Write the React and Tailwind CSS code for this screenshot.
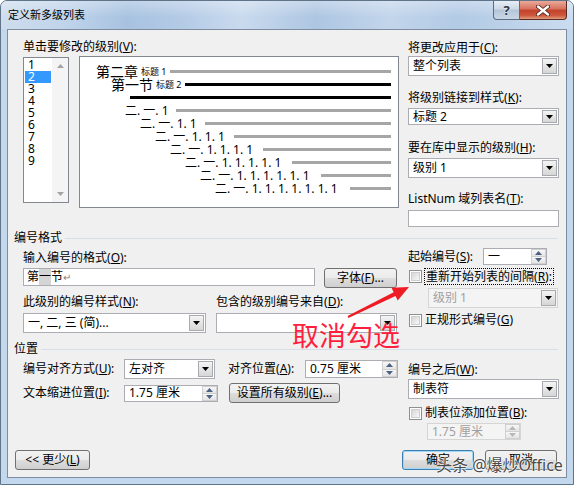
import React from 'react';

const FONT = "font-['Noto_Sans','Noto_Sans_CJK_SC',sans-serif]";

function Key({ label, k, colon = true }) {
  return (
    <span className="whitespace-nowrap">
      {label}(<u>{k}</u>){colon ? ':' : ''}
    </span>
  );
}

function Down({ color = '#000' }) {
  return (
    <svg width="7" height="4" viewBox="0 0 7 4">
      <path d="M0 0h7L3.5 4z" fill={color} />
    </svg>
  );
}

function Up({ color = '#000' }) {
  return (
    <svg width="7" height="4" viewBox="0 0 7 4">
      <path d="M0 4h7L3.5 0z" fill={color} />
    </svg>
  );
}

function Combo({ text, className, disabled }) {
  return (
    <div
      className={`flex items-stretch border ${
        disabled ? 'border-[#d5d5d5] bg-[#f4f4f4] text-[#a0a0a0]' : 'border-[#abadb3] bg-white'
      } ${className}`}
    >
      <span className="flex min-w-0 flex-1 items-center overflow-hidden whitespace-nowrap pl-[4px]">{text}</span>
      <span className="m-px flex w-[15px] items-center justify-center border border-[#a7abb0] bg-[linear-gradient(#f4f4f4,#d6d6d6)]">
        <Down />
      </span>
    </div>
  );
}

function Spin({ text, className, disabled }) {
  const arrow = disabled ? '#b8b8b8' : '#4d6185';
  return (
    <div
      className={`flex items-stretch border ${
        disabled ? 'border-[#d5d5d5] bg-[#f4f4f4] text-[#a0a0a0]' : 'border-[#abadb3] bg-white'
      } ${className}`}
    >
      <span className="flex flex-1 items-center whitespace-nowrap pl-[4px]">{text}</span>
      <span className="flex w-[15px] flex-col">
        <span className="flex flex-1 items-center justify-center border border-[#d0d0d0] bg-[linear-gradient(#f7f7f7,#e4e4e4)]">
          <Up color={arrow} />
        </span>
        <span className="flex flex-1 items-center justify-center border border-t-0 border-[#d0d0d0] bg-[linear-gradient(#f7f7f7,#e4e4e4)]">
          <Down color={arrow} />
        </span>
      </span>
    </div>
  );
}

function Check() {
  return (
    <span className="flex h-[13px] w-[13px] shrink-0 items-center justify-center border border-[#8e8f8f] bg-white">
      <span className="h-[9px] w-[9px] border border-[#cfcfcf] bg-[linear-gradient(135deg,#d6d6d6,#f8f8f8)]" />
    </span>
  );
}

function Btn({ children, className, focused }) {
  return (
    <button
      type="button"
      className={`flex items-center justify-center whitespace-nowrap rounded-[3px] border bg-[linear-gradient(#f2f2f2_0%,#ebebeb_50%,#dddddd_51%,#cfcfcf_100%)] ${
        focused ? 'border-[#3c7fb1] shadow-[inset_0_0_0_1px_#9fd8f6]' : 'border-[#707070]'
      } ${className}`}
    >
      <span className="whitespace-pre">{children}</span>
    </button>
  );
}

function Group({ title }) {
  return (
    <div className="flex h-[14px] items-center pl-[6px] pr-[8px]">
      <span className="whitespace-nowrap">{title}</span>
      <span className="ml-[3px] h-px flex-1 bg-[#d5dfe5]" />
    </div>
  );
}

const levels = [
  { pl: 'pl-[45px]', w: 'w-[51px]', t: '二. 一. 1' },
  { pl: 'pl-[60px]', w: 'w-[65px]', t: '二. 一. 1. 1' },
  { pl: 'pl-[75px]', w: 'w-[79px]', t: '二. 一. 1. 1. 1' },
  { pl: 'pl-[90px]', w: 'w-[93px]', t: '二. 一. 1. 1. 1. 1' },
  { pl: 'pl-[105px]', w: 'w-[107px]', t: '二. 一. 1. 1. 1. 1. 1' },
  { pl: 'pl-[120px]', w: 'w-[121px]', t: '二. 一. 1. 1. 1. 1. 1. 1' },
  { pl: 'pl-[135px]', w: 'w-[135px]', t: '二. 一. 1. 1. 1. 1. 1. 1. 1' },
];

function Preview() {
  return (
    <div className="h-[152px] w-[320px] border border-[#828790] bg-white pr-[7px] pt-[8px]">
      <div className="flex h-[13px] items-center pl-[16px]">
        <span className="whitespace-nowrap text-[14px]">第二章</span>
        <span className="ml-[3px] whitespace-nowrap text-[9px]">标题 1</span>
        <span className="ml-[3px] h-[3px] flex-1 bg-[#a6a6a6]" />
      </div>
      <div className="flex h-[13px] items-center pl-[31px]">
        <span className="whitespace-nowrap text-[14px]">第一节</span>
        <span className="ml-[3px] whitespace-nowrap text-[9px]">标题 2</span>
        <span className="ml-[3px] h-[3px] flex-1 bg-black" />
      </div>
      <div className="flex h-[13px] items-center pl-[50px]">
        <span className="h-[3px] flex-1 bg-black" />
      </div>
      {levels.map((r) => (
        <div key={r.t} className={`flex h-[13px] items-center ${r.pl}`}>
          <span className={`shrink-0 whitespace-nowrap ${r.w}`}>{r.t}</span>
          <span className="h-[3px] flex-1 bg-[#a6a6a6]" />
        </div>
      ))}
    </div>
  );
}

function LevelList() {
  return (
    <div className="mt-[1px] flex h-[146px] w-[46px] border border-[#828790] bg-white">
      <div className="w-[28px] pt-[1px] text-[12px]">
        {['1', '2', '3', '4', '5', '6', '7', '8', '9'].map((n, i) => (
          <div
            key={n}
            className={`h-[12px] leading-[12px] ${i === 1 ? 'mx-px bg-[#3399ff] pl-[3px] text-white' : 'pl-[4px]'}`}
          >
            {n}
          </div>
        ))}
      </div>
      <div className="flex w-[16px] flex-col justify-between bg-[#f4f4f4]">
        <span className="flex h-[16px] items-center justify-center">
          <Up color="#a3a3a3" />
        </span>
        <span className="flex h-[16px] items-center justify-center">
          <Down color="#a3a3a3" />
        </span>
      </div>
    </div>
  );
}

function TitleBar() {
  return (
    <div className="flex h-[28px] items-start bg-[linear-gradient(180deg,rgba(255,255,255,0.3),rgba(255,255,255,0)_60%),linear-gradient(90deg,#cfdded_0%,#bed3ea_12%,#a7c2e0_22%,#b4cbe6_32%,#c9daee_42%,#adc6e2_55%,#c2d5eb_68%,#b2cae5_80%,#cadcef_100%)]">
      <span className="pl-[7px] pt-[7px] text-[11px]">定义新多级列表</span>
      <div className="ml-auto mr-[6px] flex h-[19px]">
        <div className="flex w-[27px] items-center justify-center rounded-bl-[4px] border border-t-0 border-[#5d6d7e] bg-[linear-gradient(#e6edf5,#ccd8e6_45%,#b4c5d8_50%,#cad8e7)] text-[13px] font-bold text-[#2b3440] [text-shadow:0_0_2px_#fff]">
          ?
        </div>
        <div className="flex w-[47px] items-center justify-center rounded-br-[4px] border border-l-0 border-t-0 border-[#5b2a22] bg-[linear-gradient(#eaa99a,#d7705c_45%,#c3412b_50%,#cc573c_80%,#e29e7c)]">
          <svg width="14" height="11" viewBox="0 0 14 11">
            <path d="M2 1.5L12 9.5M12 1.5L2 9.5" stroke="#4a2018" strokeWidth="4" strokeLinecap="round" />
            <path d="M2 1.5L12 9.5M12 1.5L2 9.5" stroke="#fff" strokeWidth="2.4" strokeLinecap="round" />
          </svg>
        </div>
      </div>
    </div>
  );
}

export default function App() {
  return (
    <div
      className={`relative h-[485px] w-[574px] overflow-hidden rounded-t-[7px] border border-[#5f7489] bg-[#c3d7ed] text-[12px] leading-[14px] text-black ${FONT}`}
    >
      <TitleBar />
      <div className="mx-[6px] h-[449px] w-[560px] border border-[#7d8d9f] bg-[#f0f0f0]">
        {/* levels + preview */}
        <div className="flex h-[197px] items-start">
          <div className="w-[400px] pl-[15px] pt-[10px]">
            <Key label="单击要修改的级别" k="V" />
            <div className="mt-[2px] flex items-start gap-[10px]">
              <LevelList />
              <Preview />
            </div>
          </div>
          <div className="flex w-[151px] flex-col pt-[11px]">
            <Key label="将更改应用于" k="C" />
            <Combo text="整个列表" className="mt-[1px] h-[20px]" />
            <span className="mt-[15px]">
              <Key label="将级别链接到样式" k="K" />
            </span>
            <Combo text="标题 2" className="mt-[3px] h-[17px]" />
            <span className="mt-[16px]">
              <Key label="要在库中显示的级别" k="H" />
            </span>
            <Combo text="级别 1" className="mt-[3px] h-[20px]" />
            <span className="mt-[14px]">
              <Key label="ListNum 域列表名" k="T" />
            </span>
            <div className="mt-[4px] h-[17px] border border-[#abadb3] bg-white" />
          </div>
        </div>

        <div className="mt-[4px]">
          <Group title="编号格式" />
        </div>
        <div className="flex items-start">
          <div className="w-[400px] pl-[15px]">
            <div className="mt-[6px]">
              <Key label="输入编号的格式" k="O" />
            </div>
            <div className="mt-[3px] flex items-start">
              <div className="flex h-[18px] w-[292px] items-center border border-[#abadb3] bg-white pl-[3px]">
                <span>第</span>
                <span className="flex h-full items-center bg-[#d4d4d4]">一</span>
                <span>节</span>
                <span className="text-[10px] text-[#808080]">↵</span>
              </div>
              <Btn className="ml-[9px] h-[20px] w-[73px]">
                <Key label="字体" k="F" colon={false} />
                ...
              </Btn>
            </div>
            <div className="mt-[7px] flex">
              <span className="w-[193px]">
                <Key label="此级别的编号样式" k="N" />
              </span>
              <Key label="包含的级别编号来自" k="D" />
            </div>
            <div className="mt-[4px] flex">
              <Combo text="一, 二, 三 (简)..." className="h-[20px] w-[183px]" />
              <Combo text="" className="ml-[10px] h-[20px] w-[181px]" />
            </div>
          </div>
          <div className="flex w-[151px] flex-col">
            <div className="mt-[3px] flex h-[17px] items-center">
              <span className="w-[75px]">
                <Key label="起始编号" k="S" />
              </span>
              <Spin text="一" className="h-[17px] w-[64px]" />
            </div>
            <div className="mt-[3px] flex h-[17px] items-center">
              <span className="ml-[1px]">
                <Check />
              </span>
              <span className="ml-[2px] flex h-[17px] w-[130px] items-center border border-dotted border-black pl-[1px]">
                <Key label="重新开始列表的间隔" k="R" />
              </span>
            </div>
            <Combo text="级别 1" disabled className="ml-[20px] mt-[3px] h-[20px] w-[130px]" />
            <div className="mt-[5px] flex h-[14px] items-center">
              <span className="ml-[1px]">
                <Check />
              </span>
              <span className="ml-[3px]">
                <Key label="正规形式编号" k="G" colon={false} />
              </span>
            </div>
          </div>
        </div>

        <div className="mt-[9px]">
          <Group title="位置" />
        </div>
        <div className="flex h-[84px] items-start">
          <div className="w-[400px] pl-[15px]">
            <div className="mt-[3px] flex h-[20px] items-center">
              <span className="w-[101px]">
                <Key label="编号对齐方式" k="U" />
              </span>
              <Combo text="左对齐" className="h-[20px] w-[91px]" />
              <span className="ml-[13px] w-[77px]">
                <Key label="对齐位置" k="A" />
              </span>
              <Spin text="0.75 厘米" className="h-[18px] w-[93px]" />
            </div>
            <div className="mt-[4px] flex h-[20px] items-center">
              <span className="w-[101px]">
                <Key label="文本缩进位置" k="I" />
              </span>
              <Spin text="1.75 厘米" className="h-[17px] w-[94px]" />
              <Btn className="ml-[11px] h-[20px] w-[111px]">
                <Key label="设置所有级别" k="E" colon={false} />
                ...
              </Btn>
            </div>
          </div>
          <div className="flex w-[151px] flex-col">
            <span className="mt-[7px]">
              <Key label="编号之后" k="W" />
            </span>
            <Combo text="制表符" className="mt-[2px] h-[20px]" />
            <div className="mt-[7px] flex h-[14px] items-center">
              <span className="ml-[1px]">
                <Check />
              </span>
              <span className="ml-[3px]">
                <Key label="制表位添加位置" k="B" />
              </span>
            </div>
            <Spin text="1.75 厘米" disabled className="ml-[19px] mt-[3px] h-[17px] w-[94px]" />
          </div>
        </div>

        <div className="mt-[10px] flex">
          <Btn className="ml-[7px] h-[20px] w-[75px]">
            {'<< '}
            <Key label="更少" k="L" colon={false} />
          </Btn>
          <Btn focused className="ml-auto h-[20px] w-[72px]">
            确定
          </Btn>
          <Btn className="ml-[11px] mr-[9px] h-[20px] w-[72px]">取消</Btn>
        </div>
      </div>

      {/* annotation */}
      <svg className="pointer-events-none absolute left-0 top-0" width="574" height="485">
        <polygon
          points="346.6,315.1 392.7,291.3 390.5,286.8 408,286 396.7,299.4 394.5,294.9 347.4,316.9"
          fill="#ee1c25"
        />
      </svg>
      <span className="absolute left-[291px] top-[321px] whitespace-nowrap text-[27px] leading-[28px] text-[#ff1f3d]">
        取消勾选
      </span>
      <span className="absolute left-[435px] top-[456px] whitespace-nowrap text-[16px] leading-[16px] text-[#4a4a4a] [text-shadow:0_0_2px_#fff,0_0_2px_#fff,0_0_1px_#fff]">
        头条 @爆炒Office
      </span>
    </div>
  );
}
